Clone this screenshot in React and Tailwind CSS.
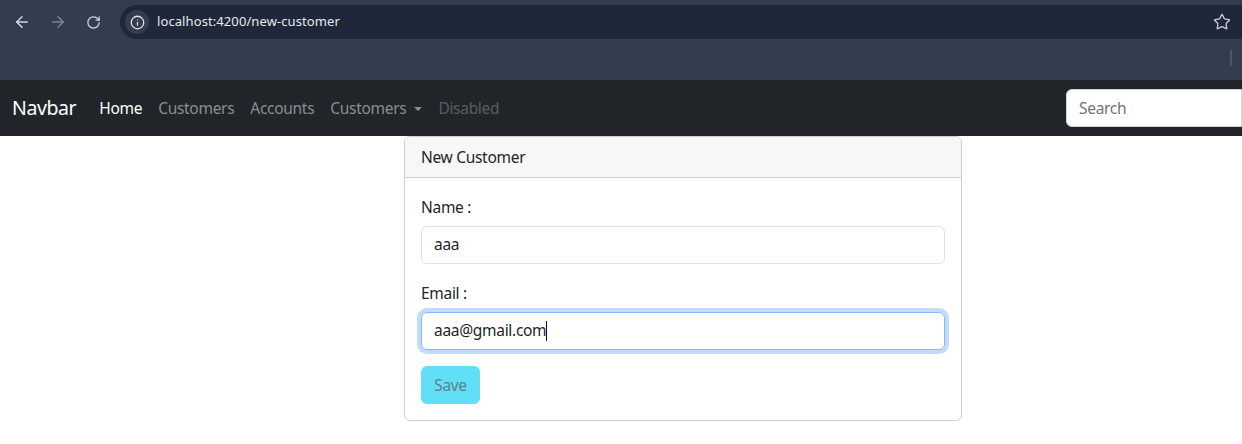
import React from 'react';
import { ArrowLeft, ArrowRight, RotateCw, Info, Star } from 'lucide-react';

const font = "font-['Noto_Sans',sans-serif]";
const body = 'text-[15.5px] tracking-[-0.3px]';

const NavLink = ({ children, className = 'text-[#8b8d90]' }) => (
  <a className={`px-2 pt-px ${body} ${className}`}>{children}</a>
);

const BrowserBar = () => (
  <div className="h-[80px] bg-[#343d4f] border-b border-[#3e4247] overflow-hidden">
    <div className="flex items-center h-[34px] mt-[5px]">
      <div className="flex items-center w-[120px] pl-[13px] gap-[18px] shrink-0">
        <ArrowLeft size={18} strokeWidth={2} className="text-[#d5d8de]" />
        <ArrowRight size={18} strokeWidth={2} className="text-[#7e8593]" />
        <RotateCw size={15} strokeWidth={2} className="ml-[1px] text-[#d5d8de]" />
      </div>
      <div className="flex-1 h-[34px] bg-[#1e283a] rounded-l-[17px] flex items-center pl-[5px] pr-[11px]">
        <div className="w-[24px] h-[24px] rounded-full bg-[#343d4f] flex items-center justify-center">
          <Info size={15} strokeWidth={2} className="text-[#e3e5e9]" />
        </div>
        <span className="ml-[8px] text-[13px] tracking-[0.09px] text-[#e6e8ec]">localhost:4200/new-customer</span>
        <Star size={18} strokeWidth={1.8} className="ml-auto text-[#c8ccd4]" />
      </div>
    </div>
    <div className="flex justify-end pr-[10px] mt-[11px]">
      <div className="w-[2px] h-[16px] bg-[#4f5768]" />
    </div>
  </div>
);

const Navbar = () => (
  <nav className="h-[56px] bg-[#212529] flex items-center pl-[12px] overflow-hidden">
    <span className="text-[19.5px] text-white tracking-[-0.4px] mr-[15px]">Navbar</span>
    <div className="flex items-center">
      <NavLink className="text-white">Home</NavLink>
      <NavLink>Customers</NavLink>
      <NavLink>Accounts</NavLink>
      <NavLink>
        <span className="inline-flex items-center">
          Customers
          <span className="ml-[8px] w-0 h-0 border-x-[4.5px] border-x-transparent border-t-[4.5px] border-t-[#8b8d90]" />
        </span>
      </NavLink>
      <NavLink className="text-[#5a5d60]">Disabled</NavLink>
    </div>
    <div className={`ml-auto w-[176px] shrink-0 h-[38px] bg-white border border-[#ced4da] rounded-l-[6px] flex items-center pl-[12px] pt-px ${body} text-[#6c757d]`}>
      Search
    </div>
  </nav>
);

const Field = ({ label, children }) => (
  <div>
    <label className={`block leading-[24px] ${body} text-[#212529] mb-[7px]`}>{label}</label>
    {children}
  </div>
);

const NewCustomer = () => (
  <div className="w-[558px] h-[285px] ml-[404px] bg-white border border-[#cfcfcf] rounded-[6px] overflow-hidden">
    <div className={`h-[41px] bg-[#f7f7f7] border-b border-[#cfcfcf] px-[16px] pt-px flex items-center ${body} text-[#212529]`}>
      New Customer
    </div>
    <div className="px-[16px] pt-[17px] flex flex-col">
      <Field label="Name :">
        <div className={`h-[38px] border border-[#dee2e6] rounded-[6px] px-[12px] flex items-center ${body} text-[#212529]`}>
          aaa
        </div>
      </Field>
      <div className="mt-[17px]">
        <Field label="Email :">
          <div className={`h-[38px] border border-[#86b7fe] rounded-[6px] px-[12px] flex items-center ${body} text-[#212529] shadow-[0_0_0_4px_#c2dbfe]`}>
            aaa@gmail.com
            <span className="w-px h-[20px] bg-[#111]" />
          </div>
        </Field>
      </div>
      <button className={`mt-[16px] w-[59px] h-[38px] rounded-[6px] bg-[#61dff6] pt-px ${body} text-[#5f7f88]`}>
        Save
      </button>
    </div>
  </div>
);

export default function App() {
  return (
    <div className={`${font} w-[1242px] h-[444px] bg-white overflow-hidden`}>
      <BrowserBar />
      <Navbar />
      <NewCustomer />
    </div>
  );
}
